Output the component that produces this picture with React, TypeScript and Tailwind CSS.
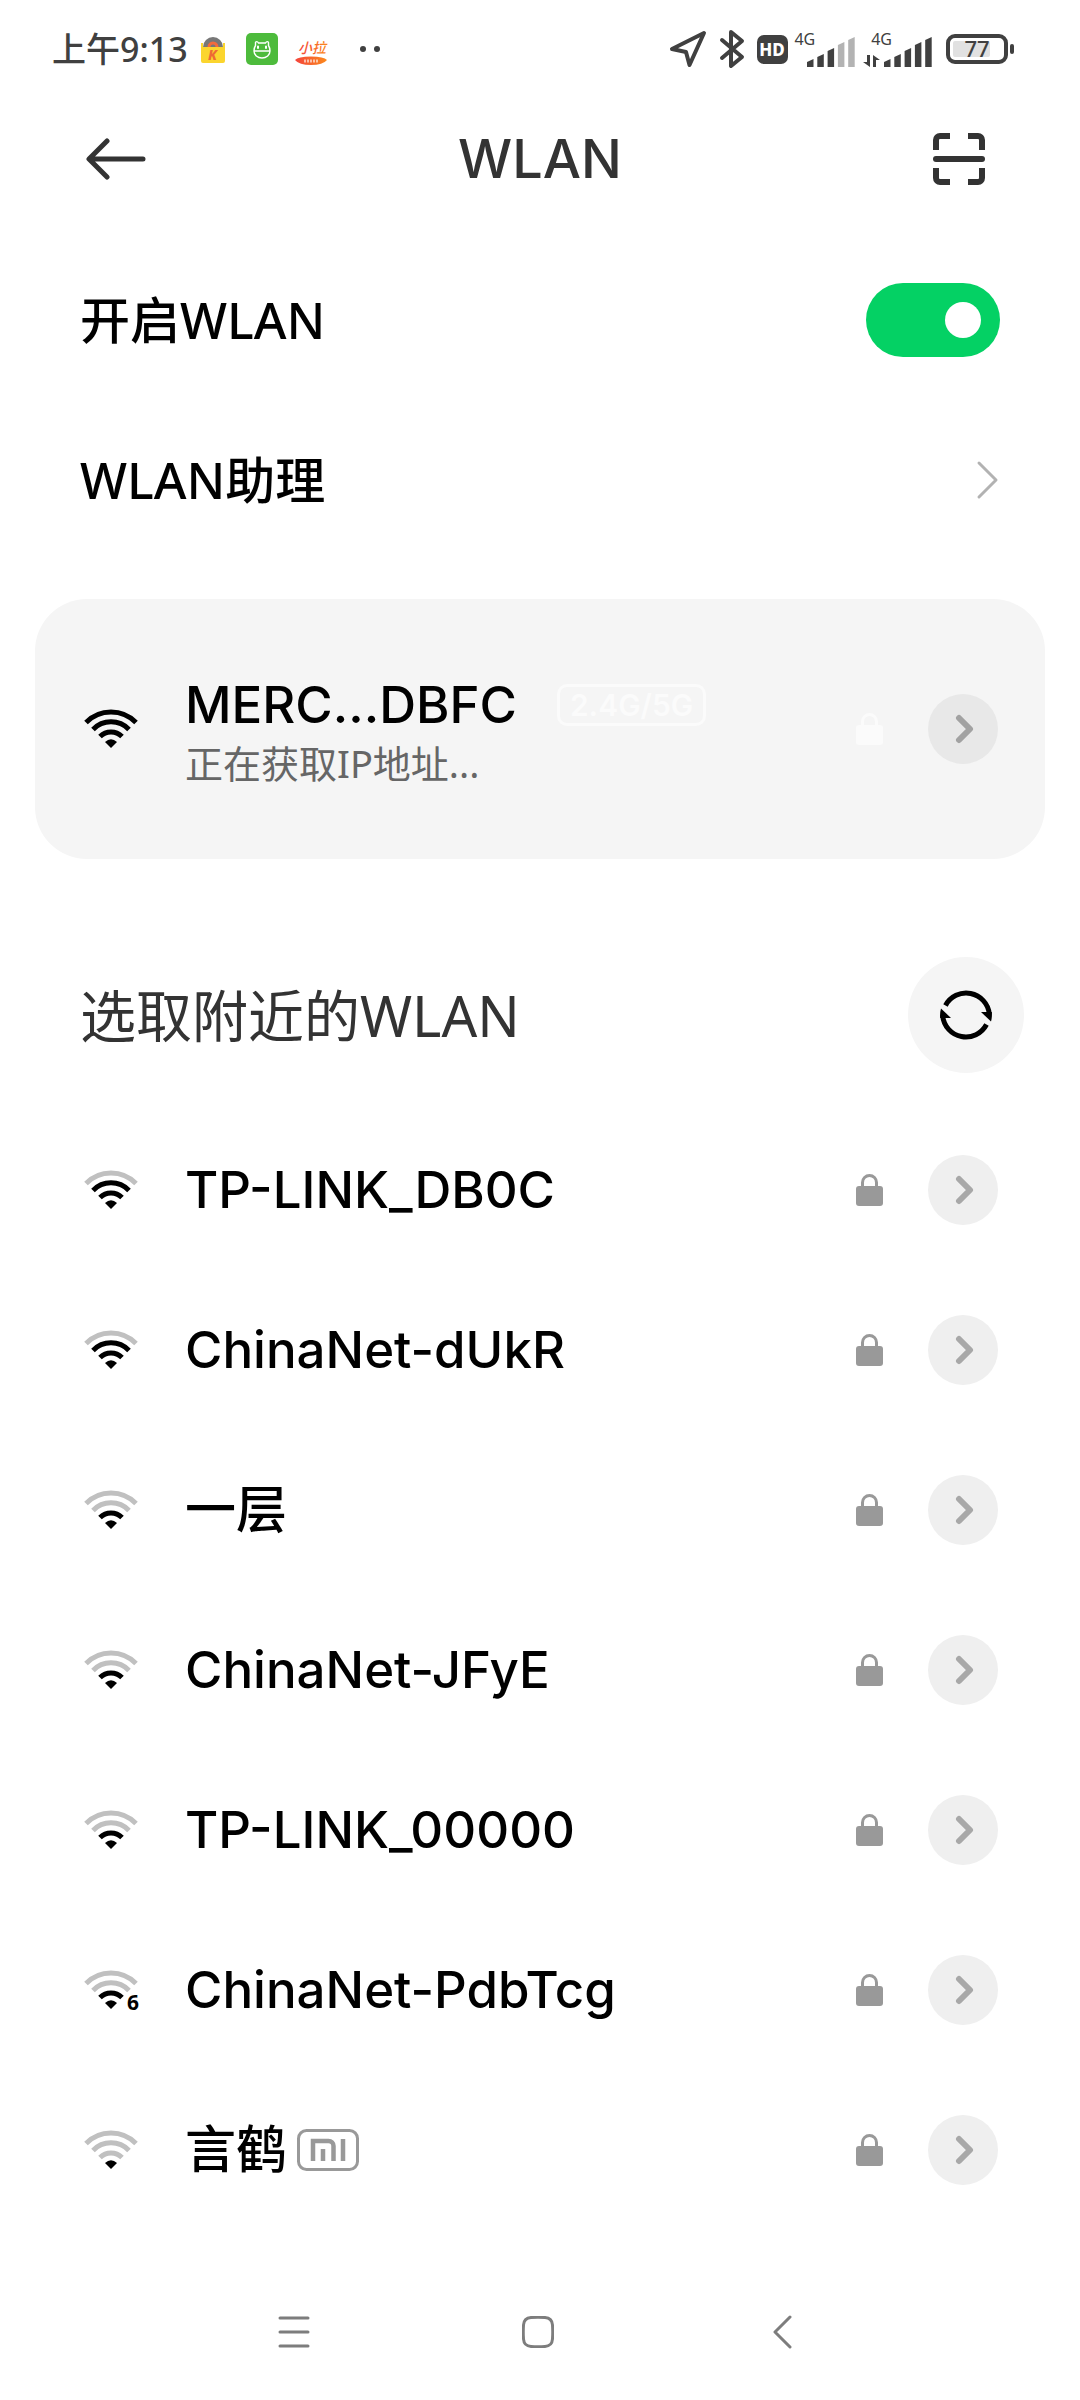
import React, { useState } from "react";

type Network = {
  name: string;
  level: number;
  wifi6?: boolean;
  mi?: boolean;
};

const networks: Network[] = [
  { name: "TP-LINK_DB0C", level: 3 },
  { name: "ChinaNet-dUkR", level: 3 },
  { name: "一层", level: 2 },
  { name: "ChinaNet-JFyE", level: 2 },
  { name: "TP-LINK_00000", level: 2 },
  { name: "ChinaNet-PdbTcg", level: 2, wifi6: true },
  { name: "言鹤", level: 1, mi: true },
];

const WifiIcon = ({ level, wifi6 }: { level: number; wifi6?: boolean }) => {
  const color = (n: number) => (level >= n ? "#000" : "#c0c0c0");

  return (
    <svg width="54" height="40" viewBox="0 0 54 40" fill="none" strokeWidth="5" className="shrink-0 overflow-visible">
      <path d="M2 13.5A35 35 0 0 1 52 13.5" stroke={color(4)} />
      <path d="M9 20.5A25 25 0 0 1 45 20.5" stroke={color(3)} />
      <path d="M16 27.5A15.5 15.5 0 0 1 38 27.5" stroke={color(2)} />
      <path d="M27 39L21 33Q27 27.5 33 33Z" fill={color(1)} />
      {wifi6 && (
        <text x="43" y="40" fontSize="21" fontWeight="700" fill="#000" fontFamily="Noto Sans, sans-serif">
          6
        </text>
      )}
    </svg>
  );
};

const LockIcon = ({ className }: { className: string }) => (
  <svg width="27" height="32" viewBox="0 0 27 32" className={className}>
    <path d="M6.5 14V8.5a7 7 0 0 1 14 0V14" fill="none" stroke="currentColor" strokeWidth="3" />
    <rect y="12" width="27" height="20" rx="3" fill="currentColor" />
  </svg>
);

const DetailButton = ({ label, className }: { label: string; className: string }) => (
  <button
    type="button"
    aria-label={label}
    className={`flex size-[70px] shrink-0 items-center justify-center rounded-full ${className}`}
  >
    <svg width="20" height="30" viewBox="0 0 20 30" fill="none" className="ml-1">
      <path d="M4 4L15 15L4 26" stroke="currentColor" strokeWidth="6" strokeLinecap="round" strokeLinejoin="round" />
    </svg>
  </button>
);

const SignalBars = ({ strength }: { strength: number }) => (
  <svg width="48" height="31" viewBox="0 0 48 31">
    {[8, 13, 19, 25, 30].map((h, i) => (
      <path
        key={h}
        d={`M${i * 10.3} 31V${34 - h}L${i * 10.3 + 6.5} ${31 - h}V31Z`}
        fill={i < strength ? "#404040" : "#b3b3b3"}
      />
    ))}
  </svg>
);

const StatusBar = () => (
  <div className="flex h-[98px] items-center justify-between pr-[65px] pl-[52px] text-[#404040]">
    <div className="flex items-center">
      <span className="text-[34px] leading-10 font-medium">上午9:13</span>
      <svg width="26" height="28" viewBox="0 0 26 28" className="ml-3">
        <path d="M3 12a10 10 0 0 1 20 0Z" fill="#777" />
        <path d="M9 12a4 4 0 0 1 8 0" fill="none" stroke="#f26a3d" strokeWidth="3" />
        <path d="M1 8h2v4h20V8h2v18a2 2 0 0 1-2 2H3a2 2 0 0 1-2-2Z" fill="#fbd52e" />
        <text x="8" y="25" fontSize="14" fontWeight="800" fontStyle="italic" fill="#ee6a35" fontFamily="Noto Sans, sans-serif">
          K
        </text>
      </svg>
      <svg width="32" height="32" viewBox="0 0 32 32" className="ml-5" fill="none">
        <rect width="32" height="32" rx="5" fill="#4dbb3c" />
        <path
          d="M8 18h16M8 18c0 4 3.5 7 8 7s8-3 8-7c0-2-.5-4-1.500-5.500V9.500c0-1-2-1.500-3 .5h-7c-1-2-3-1.500-3-.5v3C8.500 14 8 16 8 18Z"
          stroke="#fff"
          strokeWidth="1.4"
        />
        <path d="M12 13.5v1.500M20 13.5v1.500" stroke="#fff" strokeWidth="2" strokeLinecap="round" />
      </svg>
      <svg width="34" height="32" viewBox="0 0 34 32" className="ml-4">
        <defs>
          <linearGradient id="xiaola">
            <stop offset="0" stopColor="#f4433c" />
            <stop offset="1" stopColor="#fb8a1c" />
          </linearGradient>
        </defs>
        <text x="4" y="20" fontSize="14" fontWeight="500" fontStyle="italic" fill="url(#xiaola)" fontFamily="Noto Sans CJK SC, sans-serif">
          小拉
        </text>
        <path d="M1 27Q4 23.5 17 23.5T33 27Q29 32 17 32T1 27Z" fill="url(#xiaola)" />
        <path d="M10 28h14" stroke="#fff" strokeWidth="3" strokeDasharray="2 1" opacity="0.6" />
      </svg>
      <svg width="20" height="6" viewBox="0 0 20 6" className="ml-8" fill="#404040">
        <circle cx="3" cy="3" r="3" />
        <circle cx="17" cy="3" r="3" />
      </svg>
    </div>
    <div className="flex items-center">
      <svg width="38" height="38" viewBox="0 0 38 38" fill="none" stroke="#404040" strokeWidth="4" strokeLinejoin="round">
        <path d="M35 3L3 19L17 22L20.5 35Z" />
      </svg>
      <svg width="26" height="40" viewBox="0 0 26 40" fill="none" stroke="#404040" strokeWidth="4" strokeLinecap="round" strokeLinejoin="round" className="ml-3">
        <path d="M3 11L23 28L12 37V3L23 12L3 29" />
      </svg>
      <svg width="31" height="29" viewBox="0 0 31 29" className="ml-3">
        <rect width="31" height="29" rx="7" fill="#404040" />
        <text x="15" y="21" textAnchor="middle" fontSize="17" fontWeight="800" fill="#fff" fontFamily="Noto Sans, sans-serif">
          HD
        </text>
      </svg>
      <div className="ml-1.5 flex h-9 items-end">
        <span className="-mr-2 self-start text-base leading-4">4G</span>
        <SignalBars strength={3} />
      </div>
      <div className="relative ml-4 flex h-9 items-end">
        <span className="-mr-2 self-start text-base leading-4">4G</span>
        <svg width="17" height="12" viewBox="0 0 17 12" fill="#404040" className="absolute bottom-0 -left-2">
          <path d="M7 0V12L0 7H4V0ZM10 12V0L17 5H13V12Z" />
        </svg>
        <SignalBars strength={5} />
      </div>
      <svg width="69" height="30" viewBox="0 0 69 30" className="ml-3.5">
        <rect x="2" y="2" width="58" height="26" rx="7" fill="none" stroke="#404040" strokeWidth="4" />
        <rect x="7" y="7" width="37" height="16" rx="2" fill="#e1e1e1" />
        <rect x="64" y="10" width="4" height="10" rx="2" fill="#404040" />
        <text x="31" y="23" textAnchor="middle" fontSize="22" fontWeight="500" fill="#404040" fontFamily="Noto Sans, sans-serif">
          77
        </text>
      </svg>
    </div>
  </div>
);

const App = () => {
  const [enabled, setEnabled] = useState(true);

  return (
    <div className="min-h-screen bg-white font-['Noto_Sans','Noto_Sans_CJK_SC',sans-serif] text-black">
      <StatusBar />
      <header className="grid h-[122px] grid-cols-[1fr_auto_1fr] items-center px-[86px] text-[#333]">
        <button type="button" aria-label="返回" className="justify-self-start">
          <svg width="60" height="42" viewBox="0 0 60 42" fill="none" stroke="currentColor" strokeWidth="5" strokeLinecap="round" strokeLinejoin="round">
            <path d="M57 21H4M21 3L3 21L21 39" />
          </svg>
        </button>
        <h1 className="font-['Inter',sans-serif] text-[54px] leading-[64px] font-medium">WLAN</h1>
        <button type="button" aria-label="扫一扫" className="mr-2 justify-self-end">
          <svg width="54" height="54" viewBox="0 0 54 54" fill="none" stroke="currentColor" strokeWidth="6">
            <path d="M4 18V8a4 4 0 0 1 4-4H18M36 4H46a4 4 0 0 1 4 4V18M50 36V46a4 4 0 0 1-4 4H36M18 50H8a4 4 0 0 1-4-4V36" />
            <path d="M4 27H50" strokeLinecap="round" />
          </svg>
        </button>
      </header>

      <main className="pt-5">
        <div className="flex h-40 items-center justify-between px-20">
          <label htmlFor="wlan" className="text-[50px] leading-[60px] font-medium">
            开启WLAN
          </label>
          <input
            id="wlan"
            type="checkbox"
            role="switch"
            checked={enabled}
            onChange={(e) => setEnabled(e.target.checked)}
            className="flex h-[74px] w-[134px] appearance-none items-center rounded-full bg-gray-200 px-[19px] before:size-9 before:rounded-full before:bg-white before:content-[''] checked:justify-end checked:bg-[#04d164]"
          />
        </div>
        <button type="button" className="flex h-40 w-full items-center justify-between px-20 text-left">
          <span className="text-[50px] leading-[60px] font-medium">WLAN助理</span>
          <svg width="24" height="40" viewBox="0 0 24 40" fill="none" stroke="#b2b2b2" strokeWidth="3" strokeLinecap="round" strokeLinejoin="round">
            <path d="M3 3L20 20L3 37" />
          </svg>
        </button>

        <section className="mx-[35px] mt-[39px] flex h-[260px] items-center rounded-[52px] bg-[#f5f5f5] pr-[47px] pl-[49px]">
          <WifiIcon level={4} />
          <div className="ml-[47px] flex-1 pt-2">
            <div className="flex items-center">
              <span className="font-['Inter','Noto_Sans_CJK_SC',sans-serif] text-[51px] leading-[60px] font-medium">MERC...DBFC</span>
              <span className="ml-10 rounded-[10px] border-3 border-[#fbfbfb] px-2.5 font-['Inter',sans-serif] text-[30px] leading-9 font-semibold text-[#fbfbfb]">
                2.4G/5G
              </span>
            </div>
            <p className="text-[38px] leading-[56px] text-[#666]">正在获取IP地址...</p>
          </div>
          <LockIcon className="mr-[45px] text-[#fbfbfb]" />
          <DetailButton label="MERC...DBFC" className="bg-[#e8e8e8] text-[#a2a2a2]" />
        </section>

        <div className="mt-[98px] flex items-center justify-between pr-14 pl-20">
          <h2 className="text-[56px] leading-[64px] text-[#333]">选取附近的WLAN</h2>
          <button type="button" aria-label="刷新" className="flex size-[116px] items-center justify-center rounded-full bg-[#f5f5f5]">
            <svg width="52" height="52" viewBox="-26 -26 52 52">
              <path d="M-20.5 -9.5A23.3 23.3 0 0 1 23.3 -1" fill="none" stroke="#000" strokeWidth="5" />
              <path d="M15 -3H25.8Q26.3 2 25 6.5Z" />
              <path d="M20.5 9.5A23.3 23.3 0 0 1 -23.3 1" fill="none" stroke="#000" strokeWidth="5" />
              <path d="M-15 3H-25.8Q-26.3 -2 -25 -6.5Z" />
            </svg>
          </button>
        </div>

        <ul className="mt-[37px]">
          {networks.map((network) => (
            <li key={network.name} className="flex h-40 items-center pr-[82px] pl-[84px]">
              <WifiIcon level={network.level} wifi6={network.wifi6} />
              <button type="button" className="ml-[47px] flex flex-1 items-center text-left">
                <span className="font-['Inter','Noto_Sans_CJK_SC',sans-serif] text-[51px] leading-[60px] font-medium">{network.name}</span>
                {network.mi && (
                  <svg width="62" height="42" viewBox="0 0 62 42" fill="none" stroke="#999" className="ml-2.5">
                    <rect x="1.5" y="1.5" width="59" height="39" rx="8" strokeWidth="3" />
                    <path d="M16 32V12H31.5a5 5 0 0 1 5 5V32M26 20V32M46 10V32" strokeWidth="4.5" />
                  </svg>
                )}
              </button>
              <LockIcon className="mr-[45px] text-[#999]" />
              <DetailButton label={network.name} className="bg-[#efefef] text-[#a8a8a8]" />
            </li>
          ))}
        </ul>
      </main>

      <nav className="mt-[34px] grid h-[136px] grid-cols-3 items-center justify-items-center pr-[176px] pl-[172px] text-[#7d7d7d]">
        <button type="button" aria-label="最近任务">
          <svg width="32" height="32" viewBox="0 0 32 32" stroke="currentColor" strokeWidth="3" strokeLinecap="round">
            <path d="M2 2H30M2 16H30M2 30H30" />
          </svg>
        </button>
        <button type="button" aria-label="主屏幕">
          <svg width="32" height="32" viewBox="0 0 32 32" fill="none" stroke="currentColor" strokeWidth="3">
            <path d="M9 1.5Q16 1 23 1.500Q30 2 30.5 9Q31 16 30.5 23Q30 30 23 30.5Q16 31 9 30.5Q2 30 1.500 23Q1 16 1.500 9Q2 2 9 1.5Z" />
          </svg>
        </button>
        <button type="button" aria-label="后退">
          <svg width="20" height="34" viewBox="0 0 20 34" fill="none" stroke="currentColor" strokeWidth="3" strokeLinecap="round" strokeLinejoin="round">
            <path d="M18 2L3 17L18 32" />
          </svg>
        </button>
      </nav>
    </div>
  );
};

export default App;
